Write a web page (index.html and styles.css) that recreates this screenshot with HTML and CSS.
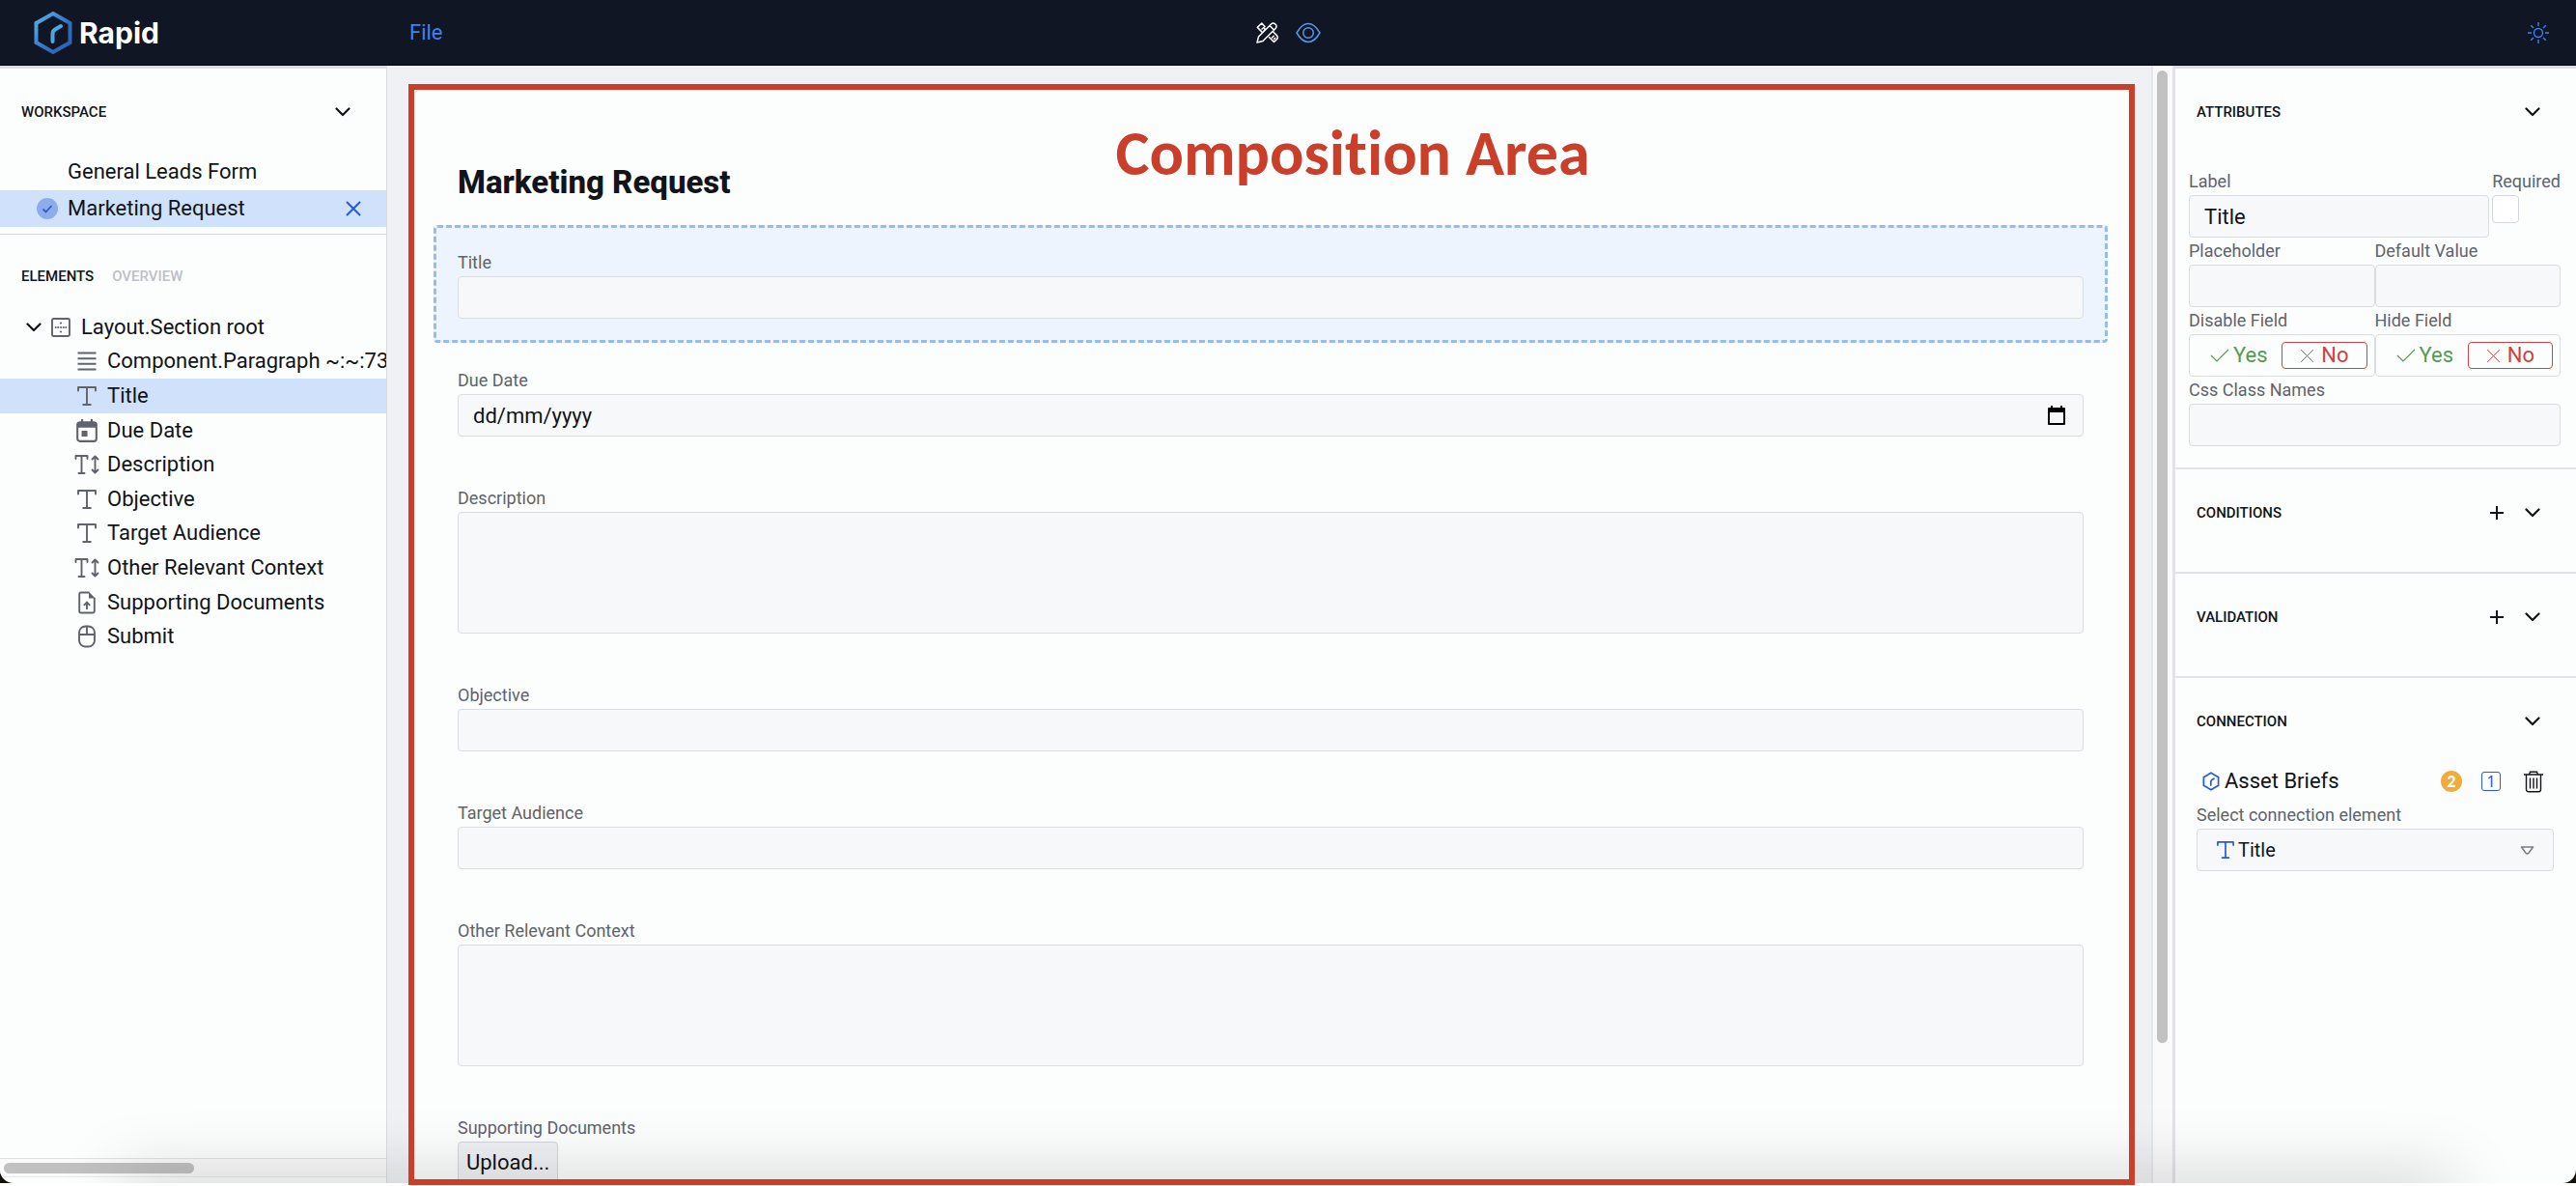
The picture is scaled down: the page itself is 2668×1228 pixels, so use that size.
FILE: index.html
```html
<!DOCTYPE html>
<html lang="en">
<head>
<meta charset="utf-8">
<title>Rapid</title>
<link rel="stylesheet" href="styles.css">
</head>
<body>
<svg class="sprite" aria-hidden="true">
  <symbol id="chevron" viewBox="0 0 16 10"><path d="M1.5 1.5 8 8l6.500-6.500" fill="none" stroke="currentColor" stroke-width="2.200" stroke-linecap="round" stroke-linejoin="round"/></symbol>
  <symbol id="cross" viewBox="0 0 16 16"><path d="M1.500 1.500l13 13M14.500 1.500l-13 13" fill="none" stroke="currentColor" stroke-linecap="round"/></symbol>
  <symbol id="plus" viewBox="0 0 16 16"><path d="M8 1v14M1 8h14" fill="none" stroke="currentColor" stroke-width="2"/></symbol>
  <symbol id="text" viewBox="0 0 20 20"><path d="M1 4.500V1h18v3.500M10 1v18M6.200 19h7.600" fill="none" stroke="currentColor" stroke-width="1.900" stroke-linecap="round" stroke-linejoin="round"/></symbol>
  <symbol id="textarea" viewBox="0 0 26 20"><path d="M1.500 4V1h12v3M7.500 1v18M4.500 19h6M21.500 2v16M18.500 4.500l3-3 3 3M18.500 15.500l3 3 3-3" fill="none" stroke="currentColor" stroke-width="1.900" stroke-linecap="round" stroke-linejoin="round"/></symbol>
  <symbol id="lines" viewBox="0 0 20 20"><path d="M.5 1.500h19M.5 7.200h19M.5 12.800h19M.5 18.500h19" fill="none" stroke="currentColor" stroke-width="1.900"/></symbol>
  <symbol id="date" viewBox="0 0 20 22"><rect x="1" y="3" width="18" height="18" rx="2.500" fill="none" stroke="currentColor" stroke-width="1.900"/><path d="M1 3h18v5H1zM4.500 0h2v3h-2zM13.500 0h2v3h-2zM5 11h5.500v5.500H5z" fill="currentColor"/></symbol>
  <symbol id="section" viewBox="0 0 20 20"><rect x="1" y="1" width="18" height="18" rx="1.500" fill="none" stroke="currentColor" stroke-width="1.900"/><g fill="currentColor"><circle cx="10" cy="5.500" r="1.100"/><circle cx="10" cy="10" r="1.100"/><circle cx="10" cy="14.500" r="1.100"/><circle cx="7.200" cy="10" r="1.100"/><circle cx="4.700" cy="10" r="1"/><circle cx="12.800" cy="10" r="1.100"/><circle cx="15.300" cy="10" r="1"/></g></symbol>
  <symbol id="upload" viewBox="0 0 18 24"><path d="M11.500 1.500H3a1.800 1.800 0 0 0-1.800 1.800v17.400A1.800 1.800 0 0 0 3 22.500h12a1.800 1.800 0 0 0 1.800-1.800V7M9 19v-7M5.800 14.800 9 11.600l3.200 3.200" fill="none" stroke="currentColor" stroke-width="1.900"/><path d="M11 .7 17.700 7.500H11z" fill="currentColor"/></symbol>
  <symbol id="mouse" viewBox="0 0 18 24"><rect x="1" y="1.500" width="16" height="21" rx="6.500" fill="none" stroke="currentColor" stroke-width="1.900"/><path d="M1 10h16M9 1.500V10" fill="none" stroke="currentColor" stroke-width="1.900"/></symbol>
  <symbol id="hex" viewBox="0 0 40 46"><path d="M20 3 37.500 13v20L20 43 2.500 33V13z" fill="none" stroke="currentColor" stroke-width="4"/><path d="M19.500 32v-8q0-3 2.500-4.500l5-3" fill="none" stroke="currentColor" stroke-width="4" stroke-linecap="round" stroke-linejoin="round"/></symbol>
</svg>

<div class="window">
<div class="app">
  <header class="topbar">
    <a class="brand" href="#">
      <svg class="brand-mark" viewBox="0 0 40 46" aria-hidden="true">
        <defs><linearGradient id="blue" x1="0" y1="0" x2="1" y2="1"><stop offset="0" stop-color="#56b4ec"/><stop offset=".6" stop-color="#2f6fc4"/><stop offset="1" stop-color="#2c5fb4"/></linearGradient></defs>
        <path d="M20 3 37.500 13v20L20 43 2.500 33V13z" fill="none" stroke="url(#blue)" stroke-width="4"/>
        <path d="M19.500 32v-8q0-3 2.500-4.500l6-3.500" fill="none" stroke="#4aa8e4" stroke-width="4" stroke-linecap="round"/>
      </svg>
      Rapid
    </a>
    <button class="menu" type="button">File</button>
    <nav class="modes" aria-label="Mode">
      <button class="design" type="button" aria-label="Design">
        <svg width="24" height="24" viewBox="0 0 24 24" fill="none" stroke="currentColor" stroke-width="1.500" stroke-linejoin="round" stroke-linecap="round"><path d="M2 22l1.500-6L16.800 2.700a2.600 2.600 0 0 1 3.700 0l.8.8a2.600 2.600 0 0 1 0 3.700L8 20.500zM15 4.500 19.500 9"/><path d="M9.200 9.600 10.500 8.300 8.700 6.500 7 8M10 5.500 6.800 2 2.300 6.400l5 5M14.500 16.500l5 5 3.400-3.400q1-2-1-4l-3.400-3.400M17.500 17l1.700-1.700M19.500 18.500l1.200-1.200"/></svg>
      </button>
      <button class="preview" type="button" aria-label="Preview">
        <svg width="26" height="22" viewBox="0 0 26 22" fill="none" stroke="currentColor" stroke-width="1.500"><path d="M1 11Q6.500 1.500 13 1.500T25 11Q19.500 20.500 13 20.500T1 11z"/><circle cx="13" cy="11" r="5.300"/></svg>
      </button>
    </nav>
    <button class="theme" type="button" aria-label="Theme">
      <svg width="22" height="22" viewBox="0 0 22 22" fill="none" stroke="currentColor" stroke-width="1.400"><circle cx="11" cy="11" r="4.500"/><path d="M11 0v4M11 18v4M0 11h4M18 11h4M3.200 3.200 6 6M16 16l2.800 2.800M3.200 18.800 6 16M16 6l2.800-2.800"/></svg>
    </button>
  </header>

  <div class="body">
    <aside class="sidebar">
      <section class="workspace">
        <div class="head"><h2>Workspace</h2><button type="button" aria-label="Collapse workspace"><svg class="chev"><use href="#chevron"/></svg></button></div>
        <ul class="files">
          <li><span class="tick"></span><a href="#">General Leads Form</a></li>
          <li class="selected">
            <svg class="tick" viewBox="0 0 22 22" aria-hidden="true"><circle cx="11" cy="11" r="11" fill="#8daceb"/><path d="M6.500 11.500 9.500 14.500 15.500 8" fill="none" stroke="#2a5bd7" stroke-width="1.800"/></svg>
            <a href="#">Marketing Request</a>
            <button type="button" aria-label="Close"><svg class="x"><use href="#cross"/></svg></button>
          </li>
        </ul>
      </section>
      <section class="elements">
        <div class="head tabs"><h2>Elements</h2><button type="button">Overview</button></div>
        <ul class="tree">
          <li class="root"><svg class="chev"><use href="#chevron"/></svg><svg class="ic"><use href="#section"/></svg><span>Layout.Section root</span></li>
          <li><svg class="ic"><use href="#lines"/></svg><span>Component.Paragraph ~:~:73</span></li>
          <li class="selected"><svg class="ic"><use href="#text"/></svg><span>Title</span></li>
          <li><svg class="ic tall"><use href="#date"/></svg><span>Due Date</span></li>
          <li><svg class="ic"><use href="#textarea"/></svg><span>Description</span></li>
          <li><svg class="ic"><use href="#text"/></svg><span>Objective</span></li>
          <li><svg class="ic"><use href="#text"/></svg><span>Target Audience</span></li>
          <li><svg class="ic"><use href="#textarea"/></svg><span>Other Relevant Context</span></li>
          <li><svg class="ic tall"><use href="#upload"/></svg><span>Supporting Documents</span></li>
          <li><svg class="ic tall"><use href="#mouse"/></svg><span>Submit</span></li>
        </ul>
      </section>
      <div class="hscroll"><div class="thumb"></div></div>
    </aside>

    <main class="canvas">
      <form class="page">
        <h1>Marketing Request</h1>
        <div class="field active"><label for="f1">Title</label><input id="f1" type="text"></div>
        <div class="field"><label for="f2">Due Date</label>
          <div class="date"><input id="f2" type="text" placeholder="dd/mm/yyyy">
            <button type="button" aria-label="Pick a date"><svg width="18" height="20" viewBox="0 0 18 20"><path d="M1 3h16v16H1z" fill="none" stroke="currentColor" stroke-width="2" stroke-linejoin="round"/><path d="M1 3h16v4H1zM3 0h2v3H3zM13 0h2v3h-2z" fill="currentColor"/></svg></button></div>
        </div>
        <div class="field"><label for="f3">Description</label><textarea id="f3"></textarea></div>
        <div class="field"><label for="f4">Objective</label><input id="f4" type="text"></div>
        <div class="field"><label for="f5">Target Audience</label><input id="f5" type="text"></div>
        <div class="field"><label for="f6">Other Relevant Context</label><textarea id="f6"></textarea></div>
        <div class="field"><label for="f7">Supporting Documents</label><button id="f7" class="upload" type="button">Upload...</button></div>
      </form>
    </main>
    <div class="vscroll"><div class="thumb"></div></div>

    <aside class="panel">
      <section>
        <div class="head"><h2>Attributes</h2><button type="button" aria-label="Collapse attributes"><svg class="chev"><use href="#chevron"/></svg></button></div>
        <div class="attrs">
          <div class="pair first">
            <div class="cell grow"><label for="a1">Label</label><input id="a1" type="text" value="Title"></div>
            <div class="cell"><label for="a2">Required</label><input id="a2" type="checkbox"></div>
          </div>
          <div class="pair">
            <div class="cell"><label for="a3">Placeholder</label><input id="a3" type="text"></div>
            <div class="cell"><label for="a4">Default Value</label><input id="a4" type="text"></div>
          </div>
          <div class="pair">
            <div class="cell"><span class="caption" id="a5">Disable Field</span>
              <div class="toggle" role="group" aria-labelledby="a5"><button class="yes" type="button"><svg width="20" height="14" viewBox="0 0 20 14"><path d="M1 7l6 6L19 1" fill="none" stroke="currentColor" stroke-width="1.200"/></svg>Yes</button><button class="no" type="button" aria-pressed="true"><svg class="x"><use href="#cross"/></svg>No</button></div></div>
            <div class="cell"><span class="caption" id="a6">Hide Field</span>
              <div class="toggle" role="group" aria-labelledby="a6"><button class="yes" type="button"><svg width="20" height="14" viewBox="0 0 20 14"><path d="M1 7l6 6L19 1" fill="none" stroke="currentColor" stroke-width="1.200"/></svg>Yes</button><button class="no" type="button" aria-pressed="true"><svg class="x"><use href="#cross"/></svg>No</button></div></div>
          </div>
          <div class="cell"><label for="a7">Css Class Names</label><input id="a7" type="text"></div>
        </div>
      </section>
      <section class="short">
        <div class="head"><h2>Conditions</h2><button type="button" aria-label="Add condition"><svg class="plus"><use href="#plus"/></svg></button><button type="button" aria-label="Collapse conditions"><svg class="chev"><use href="#chevron"/></svg></button></div>
      </section>
      <section class="short">
        <div class="head"><h2>Validation</h2><button type="button" aria-label="Add validation"><svg class="plus"><use href="#plus"/></svg></button><button type="button" aria-label="Collapse validation"><svg class="chev"><use href="#chevron"/></svg></button></div>
      </section>
      <section>
        <div class="head"><h2>Connection</h2><button type="button" aria-label="Collapse connection"><svg class="chev"><use href="#chevron"/></svg></button></div>
        <div class="connection">
          <div class="source">
            <svg class="hex"><use href="#hex"/></svg><span class="name">Asset Briefs</span>
            <span class="badge">2</span><span class="count">1</span>
            <button type="button" aria-label="Delete"><svg width="20" height="23" viewBox="0 0 20 23" fill="none" stroke="currentColor" stroke-width="1.400"><path d="M0 4h20M5.500 4l1-2.700h7l1 2.700M2.500 4v15.500a2.300 2.300 0 0 0 2.300 2.300h10.400a2.300 2.300 0 0 0 2.300-2.300V4M6.500 7.500v11M10 7.500v11M13.500 7.500v11"/></svg></button>
          </div>
          <label for="c1">Select connection element</label>
          <div class="select">
            <select id="c1"><option>Title</option></select>
            <svg class="type"><use href="#text"/></svg>
            <svg class="caret" viewBox="0 0 15 9"><path d="M1.500 1h12L9 7.200q-1.500 1.300-3 0z" fill="none" stroke="currentColor" stroke-width="1.500" stroke-linejoin="round"/></svg>
          </div>
        </div>
      </section>
    </aside>
  </div>
  <div class="shade"></div>
</div>
</div>
<div class="frame"><span>Composition Area</span></div>
</body>
</html>
```
FILE: styles.css
```css
* { box-sizing: border-box; }
body {
  margin: 0;
  height: 100vh;
  overflow: hidden;
  position: relative;
  background: #fff;
  color: #111418;
  font: 22px/36px Roboto, "Liberation Sans", sans-serif;
}
h1, h2, ul { margin: 0; padding: 0; }
ul { list-style: none; }
a { color: inherit; text-decoration: none; }
svg { display: block; flex: none; }
button { border: 0; padding: 0; background: none; color: inherit; font: inherit; }
input, textarea, select { font: inherit; color: inherit; margin: 0; }
.sprite { position: absolute; width: 0; height: 0; }

.window { height: calc(100vh - 3px); background: #14110d; }
.app {
  position: relative;
  display: flex;
  flex-direction: column;
  height: 100%;
  overflow: hidden;
  border-radius: 0 0 14px 14px;
  background: #fcfdfd;
}

/* Top bar */
.topbar {
  display: grid;
  grid-template-columns: 400px 1fr auto 1fr;
  align-items: center;
  height: 68px;
  flex: none;
  background: #101623;
  border-bottom: 1px solid #03050a;
}
.brand {
  display: flex;
  align-items: center;
  gap: 7px;
  padding-left: 35px;
  color: #fff;
  font: 700 30px/44px Inter, sans-serif;
}
.brand-mark { width: 40px; height: 46px; }
.menu { justify-self: start; padding-left: 24px; color: #3b82f6; }
.modes { display: flex; align-items: center; gap: 18px; margin-right: 400px; }
.design { color: #fff; }
.preview { color: #5797e8; }
.theme { justify-self: end; margin-right: 28px; color: #3b82f6; }

.body { display: flex; flex: 1; min-height: 0; }

/* Shared section headings */
.head { display: flex; align-items: center; height: 88px; padding: 2px 37px 0 22px; }
.head h2 { flex: 1; font-size: 15px; line-height: 24px; font-weight: 500; text-transform: uppercase; }
.chev { width: 16px; height: 10px; }
.plus { width: 16px; height: 16px; margin-right: 21px; }
.x { width: 16px; height: 16px; stroke-width: 2px; }

/* Left sidebar */
.sidebar {
  display: flex;
  flex-direction: column;
  width: 401px;
  flex: none;
  border-top: 3px solid #dcdde2;
  border-right: 1px solid #dcdde2;
}
.workspace { padding-bottom: 7px; border-bottom: 1px solid #d9dbe0; }
.files li { display: flex; align-items: center; gap: 10px; height: 38px; padding: 0 26px 0 38px; }
.files a { flex: 1; }
.files button { color: #2a5bd7; }
.tick { width: 22px; height: 22px; }
.selected { background: #cfe1fb; }
.tabs { height: 78px; gap: 19px; padding-top: 8px; }
.tabs h2 { flex: none; }
.tabs button { font-size: 15px; line-height: 24px; font-weight: 500; text-transform: uppercase; color: #bcc0c7; }
.elements { flex: 1; overflow: hidden; }
.tree { display: grid; grid-auto-rows: 1fr; height: 356px; white-space: nowrap; }
.tree li { display: flex; align-items: center; gap: 8px; padding-left: 77px; overflow: hidden; }
.tree .root { gap: 10px; padding-left: 27px; }
.tree .root .ic { width: 20px; margin-right: 1px; }
.ic { width: 26px; height: 20px; color: #5f636b; }
.tall { height: 24px; }
.hscroll {
  height: 20px;
  margin-bottom: 6px;
  padding: 4px 4px 0;
  background: #fafafa;
  border-top: 1px solid #e0e1e4;
  border-bottom: 1px solid #e8e9eb;
}
.thumb { background: #c1c1c1; border-radius: 6px; }
.hscroll .thumb { width: 197px; height: 11px; }

/* Canvas */
.canvas { flex: 1; min-width: 0; padding: 19px 20px 0 24px; background: #f0f1f4; overflow: hidden; }
.page { padding: 82px 25px 0 24px; background: #fcfdfd; }
.page h1 { padding: 0 25px; height: 64px; font-size: 33px; line-height: 40px; font-weight: 800; }
.field { display: flex; flex-direction: column; align-items: stretch; padding: 22px; border: 3px solid transparent; border-radius: 4px; }
.active { background: #edf4fe; border: 3px dashed #95bcec; }
label, .caption { display: block; font-size: 18px; line-height: 28px; color: #5f636b; white-space: nowrap; }
input, textarea, select { background: #f7f8fa; border: 1px solid #dcdde2; border-radius: 4px; }
input[type="text"], select { display: block; width: 100%; height: 44px; padding: 0 15px; }
textarea { height: 126px; resize: none; }
.date { display: grid; align-items: center; }
.date > * { grid-area: 1 / 1; }
.date button { justify-self: end; margin-right: 19px; color: #000; }
::placeholder { color: #111418; opacity: 1; }
.upload { align-self: flex-start; height: 44px; padding: 0 8px; background: #f0f1f4; border: 1px solid #d3d5da; border-radius: 4px; }

.vscroll { width: 22px; flex: none; padding: 5px 4px 0; background: #fafafa; border-left: 2px solid #e6e7eb; }
.vscroll .thumb { width: 11px; height: calc(100% - 145px); }

/* Right panel */
.panel { width: 418px; flex: none; border-top: 3px solid #dcdde2; border-left: 3px solid #e2e2e8; }
.panel section + section { border-top: 2px solid #e2e2e8; }
.short { height: 108px; }
.attrs { padding: 15px 16px 22px 14px; }
.pair { display: grid; grid-template-columns: 1fr 1fr; }
.pair.first { grid-template-columns: 1fr auto; column-gap: 3px; }
.cell input[type="checkbox"] { display: block; appearance: none; width: 28px; height: 29px; background: #fff; border: 1px solid #d3d5da; border-radius: 4px; }
.toggle { display: flex; align-items: center; justify-content: space-between; height: 44px; padding: 0 7px 0 21px; border: 1px solid #dcdde2; border-radius: 4px; }
.toggle button { display: flex; align-items: center; gap: 4px; height: 28px; line-height: 26px; }
.yes { color: #559b50; }
.no { color: #d0413e; }
.toggle .no { gap: 7px; padding: 0 18px; border: 1px solid #d0413e; border-radius: 4px; }
.toggle .x { width: 15px; height: 15px; stroke-width: 1px; }
.connection { padding: 0 23px 0 22px; }
.source { display: flex; align-items: center; height: 38px; margin-bottom: 2px; padding: 0 11px 0 6px; }
.hex { width: 18px; height: 20px; margin-right: 5px; color: #2a5bd7; }
.name { flex: 1; }
.badge { width: 22px; height: 22px; border-radius: 50%; background: #f0ab3c; color: #fff; font: 900 16px/22px Lato, sans-serif; text-align: center; }
.count { width: 20px; height: 20px; margin: 0 24px 0 20px; border: 1px solid #2a5bd7; border-radius: 3px; color: #2a5bd7; font: 16px/18px "Noto Sans", sans-serif; text-align: center; }
.select { display: grid; align-items: center; }
.select > * { grid-area: 1 / 1; }
.select select { appearance: none; padding-left: 42px; font-size: 20px; }
.type { width: 18px; height: 18px; margin-left: 21px; color: #2a5bd7; }
.caret { width: 15px; height: 9px; justify-self: end; margin-right: 20px; color: #777b82; }

/* Soft shade along the window's lower edge */
.shade {
  position: absolute;
  left: 130px;
  right: 130px;
  bottom: -30px;
  height: 30px;
  box-shadow: 0 0 70px 4px rgba(0, 0, 0, .22);
  pointer-events: none;
}

/* Annotation drawn over the canvas */
.frame {
  position: absolute;
  inset: 87px 457px 1px 423px;
  padding-top: 22px;
  border: 6px solid #c93f2a;
  color: #c93f2a;
  font: 700 66px/88px Carlito, Lato, sans-serif;
  font-variant-ligatures: none;
  text-align: center;
  pointer-events: none;
}
.frame span { padding-left: 168px; }
```
